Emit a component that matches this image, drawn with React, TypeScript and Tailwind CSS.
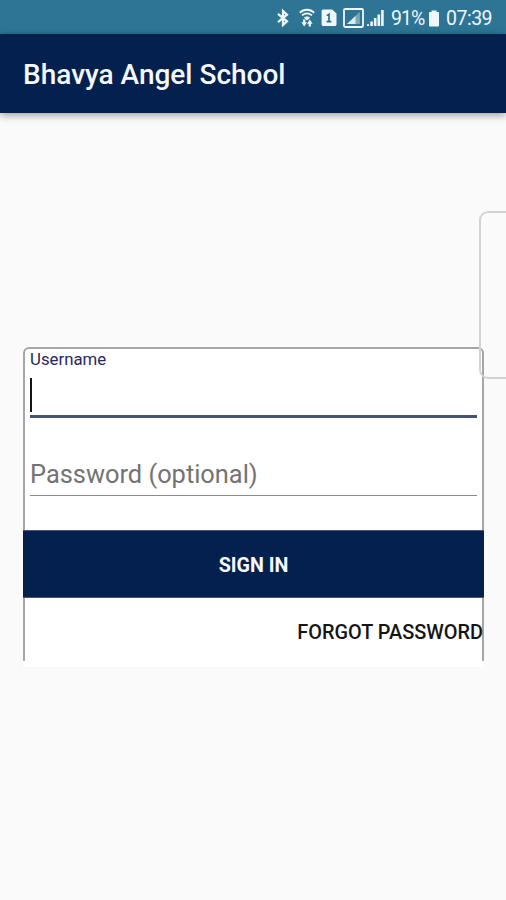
import { useState } from "react";

const SCHOOL_NAME = "Bhavya Angel School";

function BluetoothIcon() {
  return (
    <svg width="14" height="20" viewBox="0 0 14 20" fill="none" stroke="currentColor" strokeWidth="2.2">
      <path d="M2 5.800 11 13.400 7 17V3L11 6.600 2 14.200" />
    </svg>
  );
}

function WifiIcon() {
  return (
    <svg width="16" height="20" viewBox="0 0 16 20" fill="none" stroke="currentColor">
      <path d="M0.800 4.700C5 0.700 11 0.700 15.200 4.700" strokeWidth="1.9" />
      <path d="M3 7.400c3-2.500 7-2.500 10 0" strokeWidth="1.7" />
      <path d="M5.400 9.800c1.600-1.200 3.600-1.200 5.200 0L8 12z" fill="currentColor" strokeWidth="1" />
      <path d="M5.200 11.500v4M10.800 14v4.500" strokeWidth="2.2" />
      <path d="M2.400 14.300h5.600L5.200 18.500zM8 15.700h5.600L10.800 11.500z" fill="currentColor" stroke="none" />
    </svg>
  );
}

function SimIcon() {
  return (
    <svg width="16" height="18" viewBox="0 0 16 18">
      <path d="M2 0.500h9.200L15.500 4.400V15.600a1.400 1.400 0 0 1-1.400 1.400H2a1.400 1.400 0 0 1-1.400-1.400V2A1.400 1.400 0 0 1 2 .500z" fill="currentColor" />
      <path d="M5.800 6.600 8 5.200v7.600M5.600 12.600h4.800" fill="none" stroke="#28708f" strokeWidth="1.7" />
    </svg>
  );
}

function BoxedSignalIcon() {
  return (
    <svg width="21" height="20" viewBox="0 0 21 20">
      <rect x="1" y="1" width="19" height="18" rx="1.2" fill="none" stroke="currentColor" strokeWidth="1.8" />
      <path d="M4 16 16.800 3.800V16z" fill="currentColor" opacity="0.4" />
      <path d="M4 16 12.500 8V16z" fill="currentColor" opacity="0.85" />
    </svg>
  );
}

function SignalIcon() {
  return (
    <svg width="17" height="18" viewBox="0 0 17 18" fill="currentColor">
      <path d="M0 15.200h2V17H0zM3.300 12.400h2.600V17H3.300zM6.900 9h2.600v8H6.900zM10.500 5.400h2.600V17h-2.600zM14.100 1h2.600v16h-2.600z" />
    </svg>
  );
}

function BatteryIcon() {
  return (
    <svg width="12" height="17" viewBox="0 0 12 17" fill="currentColor">
      <path d="M3.500 0.500h5v1.500h1.500a1 1 0 0 1 1 1V15.500a1 1 0 0 1-1 1H2a1 1 0 0 1-1-1V3a1 1 0 0 1 1-1h1.500z" />
    </svg>
  );
}

function StatusBar() {
  return (
    <div className="flex h-[34px] items-center bg-[#2e7495] pt-[2px] pl-[276px] text-[#f0f7fb]">
      <BluetoothIcon />
      <div className="ml-[9px]">
        <WifiIcon />
      </div>
      <div className="ml-[6px]">
        <SimIcon />
      </div>
      <div className="ml-[6px]">
        <BoxedSignalIcon />
      </div>
      <div className="ml-[3px]">
        <SignalIcon />
      </div>
      <span className="ml-[7px] w-[35px] pt-[2px] text-[19.5px] leading-none tracking-[-0.9px] whitespace-nowrap">
        91%
      </span>
      <div className="ml-[2px]">
        <BatteryIcon />
      </div>
      <span className="ml-[6px] pt-[2px] text-[19.5px] leading-none tracking-[-0.5px] whitespace-nowrap">
        07:39
      </span>
    </div>
  );
}

export default function App() {
  const [username, setUsername] = useState("");
  const [password, setPassword] = useState("");

  return (
    <div className="relative h-[900px] w-[506px] overflow-hidden bg-[#fafafa] font-[Roboto,sans-serif]">
      <StatusBar />

      <header className="flex h-[79px] items-center bg-[#03204f] pt-[3px] pl-[23px] shadow-[0_2px_8px_rgba(0,0,0,0.4)]">
        <h1 className="text-[28px] leading-none font-medium whitespace-nowrap text-[#f7f8fb]">
          {SCHOOL_NAME}
        </h1>
      </header>

      <form
        className="mx-[23px] mt-[234px] w-[461px] bg-white"
        onSubmit={(event) => event.preventDefault()}
      >
        <div className="h-[183px] rounded-t-[6px] border-x-2 border-t-2 border-[#a5a5aa] px-[5px]">
          <label className="block h-[20px] text-[16.8px] leading-[20px] text-[#29285c]">
            Username
          </label>
          <div className="flex h-[49px] items-end border-b-[3px] border-[#435273] pb-[3px]">
            <div className="h-[34px] w-[2px] bg-[#151515]" />
            <input
              value={username}
              onChange={(event) => setUsername(event.target.value)}
              className="h-full min-w-0 flex-1 bg-transparent pl-1 text-[25px] caret-transparent outline-none"
            />
          </div>
          <input
            value={password}
            placeholder="Password (optional)"
            onChange={(event) => setPassword(event.target.value)}
            className="mt-[34px] block h-[44px] w-full border-b-[1.5px] border-[#8b8b8b] bg-transparent text-[25.4px] outline-none placeholder:text-[#737373]"
          />
        </div>

        <button
          type="submit"
          className="block h-[68px] w-full border-y border-[#4b557d] bg-[#03204f] pt-[3px] text-[19.7px] font-bold text-[#f7f8fb]"
        >
          SIGN IN
        </button>

        <div className="flex h-[63px] items-center justify-end border-x-2 border-[#a5a5aa] pt-[6px]">
          <button
            type="button"
            className="-mr-[1px] text-[19.9px] font-medium whitespace-nowrap text-[#151515]"
          >
            FORGOT PASSWORD
          </button>
        </div>
        <div className="h-[6px]" />
      </form>

      {/* edge panel handle, floats over the form */}
      <div className="absolute top-[211px] -right-[10px] h-[168px] w-[37px] rounded-[9px] border-2 border-[#d3d3d3]" />
    </div>
  );
}
